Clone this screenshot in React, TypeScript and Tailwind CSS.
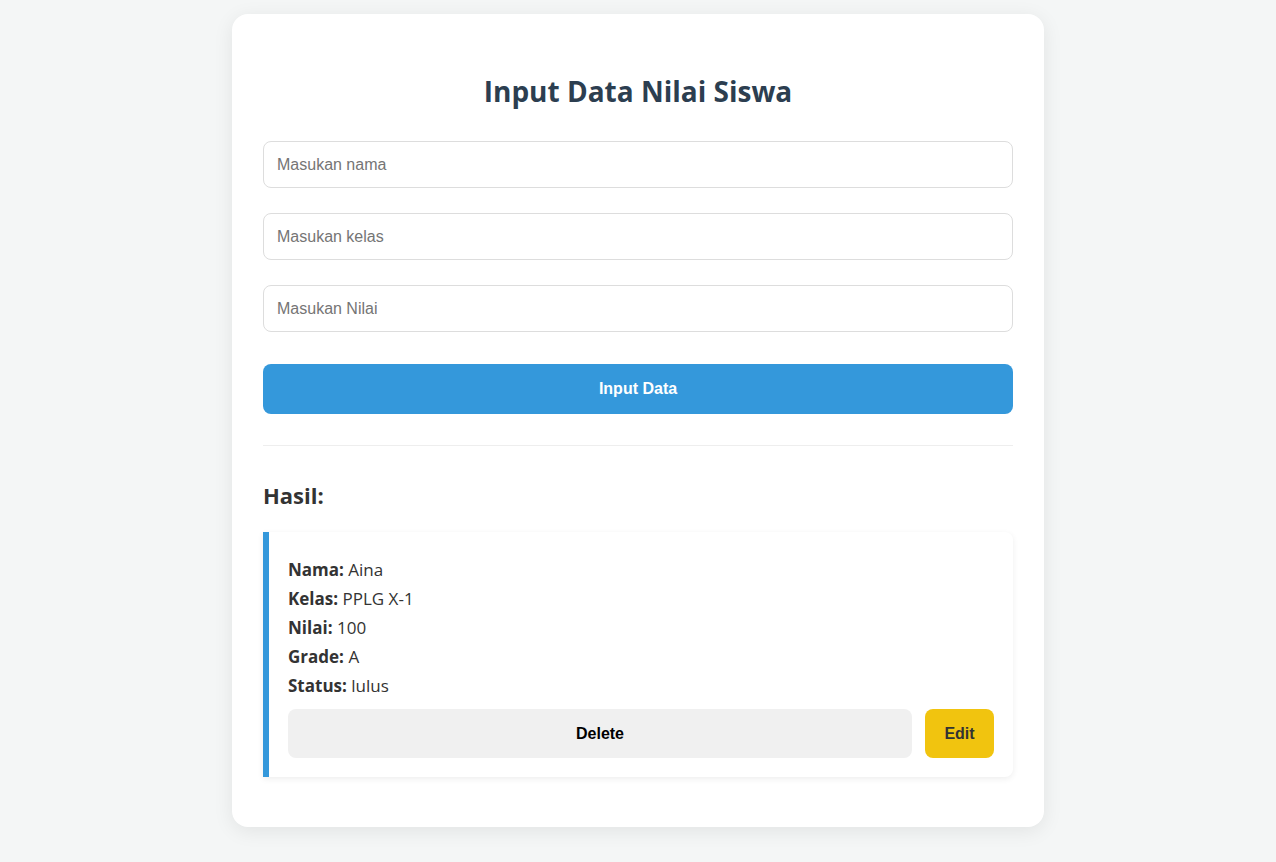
const font = { fontFamily: '"Open Sans", "Noto Sans", sans-serif' };

function Field({ placeholder }: { placeholder: string }) {
  return (
    <input
      type="text"
      placeholder={placeholder}
      className="block h-[47px] w-full rounded-lg border border-[#dddddd] bg-white px-[13px] font-['Liberation_Sans',Arial,sans-serif] text-[16px] text-[#333] outline-none placeholder:text-[#757575]"
    />
  );
}

function ResultCard() {
  const rows = [
    ["Nama:", "Aina"],
    ["Kelas:", "PPLG X-1"],
    ["Nilai:", "100"],
    ["Grade:", "A"],
    ["Status:", "lulus"],
  ];

  return (
    <div className="rounded-lg rounded-l-none border-l-[6px] border-[#3498db] bg-white px-[19px] pt-[23px] pb-[19px] shadow-[0_2px_6px_rgba(0,0,0,0.07)]">
      <div className="text-[17px] leading-[29px] text-[#333]" style={font}>
        {rows.map(([label, value]) => (
          <p key={label}>
            <b className="font-bold">{label}</b> {value}
          </p>
        ))}
      </div>

      <div className="mt-[9px] flex gap-[13px] font-['Liberation_Sans',Arial,sans-serif] text-[16px] font-bold">
        <button className="h-[49px] flex-1 rounded-lg bg-[#f0f0f0] text-black">Delete</button>
        <button className="h-[49px] w-[69px] rounded-lg bg-[#f1c40f] text-[#333]">Edit</button>
      </div>
    </div>
  );
}

export default function App() {
  return (
    <main className="min-h-screen bg-[#f4f6f6] pt-[14px] pb-[34px]">
      <div className="mx-auto w-[812px] rounded-2xl bg-white px-[31px] pt-[58px] pb-[50px] shadow-[0_4px_20px_rgba(0,0,0,0.08)]">
        <h1
          className="text-center text-[28px] leading-[38px] font-bold text-[#2c3e50]"
          style={font}
        >
          Input Data Nilai Siswa
        </h1>

        <div className="mt-[31px] space-y-[25px]">
          <Field placeholder="Masukan nama" />
          <Field placeholder="Masukan kelas" />
          <Field placeholder="Masukan Nilai" />
        </div>

        <button className="mt-[32px] h-[50px] w-full rounded-lg bg-[#3498db] font-['Liberation_Sans',Arial,sans-serif] text-[16px] font-bold text-white">
          Input Data
        </button>

        <hr className="mt-[31px] border-t border-[#eeeeee]" />

        <h2 className="mt-[34px] text-[22px] leading-[30px] font-bold text-[#333]" style={font}>
          Hasil:
        </h2>

        <div className="mt-[22px]">
          <ResultCard />
        </div>
      </div>
    </main>
  );
}
